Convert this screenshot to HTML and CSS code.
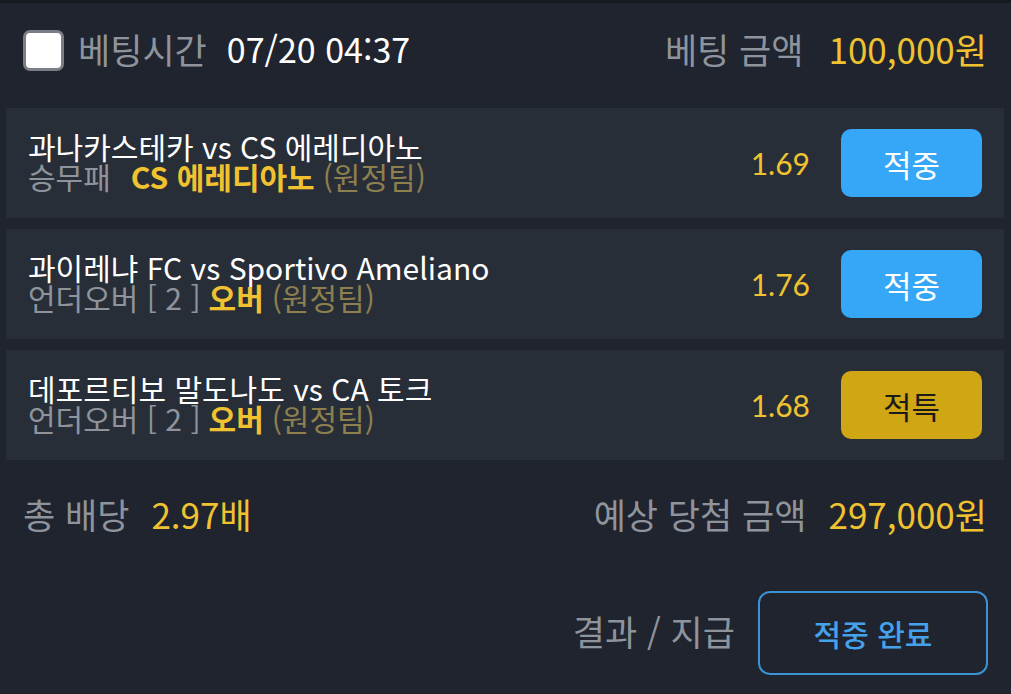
FILE: index.html
```html
<!DOCTYPE html>
<html lang="ko">
<head>
<meta charset="utf-8">
<link rel="stylesheet" href="styles.css">
</head>
<body>
<div class="topbar"></div>
<header class="header">
  <div class="left">
    <span class="checkbox"></span>
    <span class="label">베팅시간</span>
    <span class="time">07/20 04:37</span>
  </div>
  <div class="right">
    <span class="label">베팅 금액</span>
    <span class="amount">100,000원</span>
  </div>
</header>
<main class="cards">
  <div class="card">
    <div class="info">
      <div class="title">과나카스테카 vs CS 에레디아노</div>
      <div class="sub"><span class="market">승무패</span><span class="pick wide">CS 에레디아노</span><span class="side">(원정팀)</span></div>
    </div>
    <span class="odds">1.69</span>
    <span class="btn blue">적중</span>
  </div>
  <div class="card">
    <div class="info">
      <div class="title">과이레냐 FC vs Sportivo Ameliano</div>
      <div class="sub"><span class="market">언더오버 [ 2 ]</span><span class="pick">오버</span><span class="side">(원정팀)</span></div>
    </div>
    <span class="odds">1.76</span>
    <span class="btn blue">적중</span>
  </div>
  <div class="card">
    <div class="info">
      <div class="title">데포르티보 말도나도 vs CA 토크</div>
      <div class="sub"><span class="market">언더오버 [ 2 ]</span><span class="pick">오버</span><span class="side">(원정팀)</span></div>
    </div>
    <span class="odds">1.68</span>
    <span class="btn gold">적특</span>
  </div>
</main>
<section class="summary">
  <div class="left">
    <span class="label">총 배당</span>
    <span class="amount">2.97배</span>
  </div>
  <div class="right">
    <span class="label">예상 당첨 금액</span>
    <span class="amount">297,000원</span>
  </div>
</section>
<section class="result">
  <span class="label result-label">결과 / 지급</span>
  <span class="outline-btn">적중 완료</span>
</section>
</body>
</html>
```

FILE: styles.css
```css
html, body {
  margin: 0;
  padding: 0;
}
body {
  background: #1f242e;
  width: 1011px;
  height: 694px;
  overflow: hidden;
  font-family: "Noto Sans CJK KR", "Noto Sans", sans-serif;
  color: #ffffff;
}
.topbar {
  height: 3px;
  background: #161a21;
}
.header {
  height: 92px;
  padding: 0 24px 13px 23px;
  display: flex;
  align-items: center;
  justify-content: space-between;
  font-size: 35px;
  line-height: 40px;
}
.left, .right {
  display: flex;
  align-items: center;
}
.checkbox {
  width: 35px;
  height: 35px;
  background: #ffffff;
  border: 3px solid #7b7e84;
  border-radius: 7px;
  margin-right: 14px;
  margin-top: 3px;
}
.label {
  color: #8f949c;
}
.time {
  margin-left: 20px;
  color: #ffffff;
  font-size: 34px;
}
.amount {
  margin-left: 25px;
  color: #f0c230;
}
.cards {
  padding: 0 7px 0 6px;
  display: flex;
  flex-direction: column;
  gap: 11px;
}
.card {
  height: 110px;
  background: #282e38;
  display: flex;
  align-items: center;
  padding: 0 22px 0 22px;
}
.info {
  flex: 1;
  font-size: 30px;
  line-height: 30px;
  padding-bottom: 5px;
}
.title {
  color: #ffffff;
}
.sub {
  display: flex;
  align-items: baseline;
}
.market {
  color: #8f949c;
}
.pick {
  color: #f0c230;
  font-weight: 700;
  margin-left: 8px;
}
.pick.wide {
  margin-left: 20px;
}
.side {
  color: #8d7f4e;
  margin-left: 8px;
}
.odds {
  font-family: "Lato", sans-serif;
  font-size: 30px;
  color: #f0c230;
  margin-right: 31px;
}
.btn {
  width: 141px;
  height: 68px;
  border-radius: 10px;
  display: flex;
  align-items: center;
  justify-content: center;
  font-size: 31px;
}
.btn.blue {
  background: #35a7f6;
  color: #ffffff;
}
.btn.gold {
  background: #d1a614;
  color: #1b1b1b;
}
.summary {
  height: 108px;
  padding: 0 24px 0 23px;
  display: flex;
  align-items: center;
  justify-content: space-between;
  font-size: 35px;
  line-height: 40px;
}
.summary .amount {
  margin-left: 22px;
}
.result {
  margin-top: 23px;
  padding: 0 23px 0 0;
  display: flex;
  align-items: center;
  justify-content: flex-end;
  font-size: 35px;
  line-height: 40px;
}
.result-label {
  padding-bottom: 4px;
}
.outline-btn {
  margin-left: 23px;
  width: 226px;
  height: 80px;
  border: 2px solid #3b93d6;
  border-radius: 12px;
  display: flex;
  align-items: center;
  justify-content: center;
  font-size: 30px;
  color: #45a2ea;
  font-weight: 500;
}
```
